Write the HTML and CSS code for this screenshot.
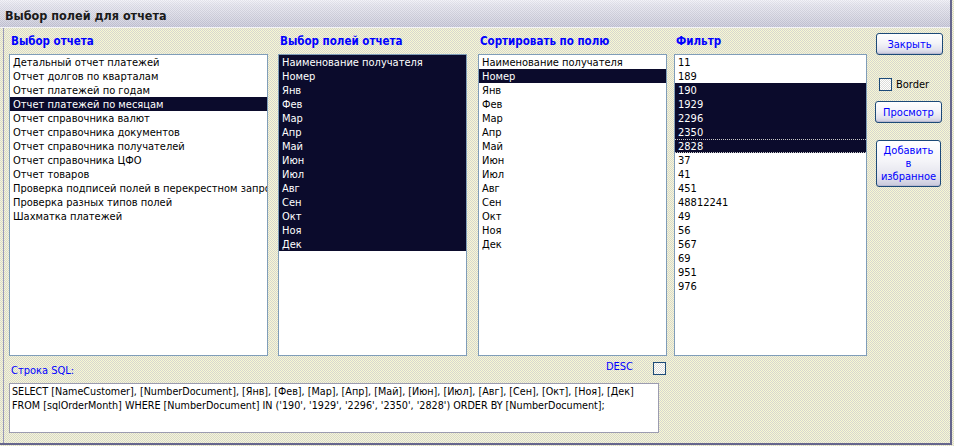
FILE: index.html
```html
<!DOCTYPE html>
<html lang="ru">
<head>
<meta charset="utf-8">
<title>Выбор полей для отчета</title>
<link rel="stylesheet" href="styles.css">
</head>
<body>
<div class="window">
  <div class="titlebar">Выбор полей для отчета</div>
  <div class="content">
    <div class="columns">
      <div class="col col-reports">
        <div class="col-label">Выбор отчета</div>
        <ul class="listbox">
          <li>Детальный отчет платежей</li>
          <li>Отчет долгов по кварталам</li>
          <li>Отчет платежей по годам</li>
          <li class="sel">Отчет платежей по месяцам</li>
          <li>Отчет справочника валют</li>
          <li>Отчет справочника документов</li>
          <li>Отчет справочника получателей</li>
          <li>Отчет справочника ЦФО</li>
          <li>Отчет товаров</li>
          <li>Проверка подписей полей в перекрестном запросе</li>
          <li>Проверка разных типов полей</li>
          <li>Шахматка платежей</li>
        </ul>
      </div>
      <div class="col col-fields">
        <div class="col-label">Выбор полей отчета</div>
        <ul class="listbox">
          <li class="sel">Наименование получателя</li>
          <li class="sel">Номер</li>
          <li class="sel">Янв</li>
          <li class="sel">Фев</li>
          <li class="sel">Мар</li>
          <li class="sel">Апр</li>
          <li class="sel">Май</li>
          <li class="sel">Июн</li>
          <li class="sel">Июл</li>
          <li class="sel">Авг</li>
          <li class="sel">Сен</li>
          <li class="sel">Окт</li>
          <li class="sel">Ноя</li>
          <li class="sel">Дек</li>
        </ul>
      </div>
      <div class="col col-sort">
        <div class="col-label">Сортировать по полю</div>
        <ul class="listbox">
          <li>Наименование получателя</li>
          <li class="sel">Номер</li>
          <li>Янв</li>
          <li>Фев</li>
          <li>Мар</li>
          <li>Апр</li>
          <li>Май</li>
          <li>Июн</li>
          <li>Июл</li>
          <li>Авг</li>
          <li>Сен</li>
          <li>Окт</li>
          <li>Ноя</li>
          <li>Дек</li>
        </ul>
      </div>
      <div class="col col-filter">
        <div class="col-label">Фильтр</div>
        <ul class="listbox">
          <li>11</li>
          <li>189</li>
          <li class="sel">190</li>
          <li class="sel">1929</li>
          <li class="sel">2296</li>
          <li class="sel">2350</li>
          <li class="sel focus">2828</li>
          <li>37</li>
          <li>41</li>
          <li>451</li>
          <li>48812241</li>
          <li>49</li>
          <li>56</li>
          <li>567</li>
          <li>69</li>
          <li>951</li>
          <li>976</li>
        </ul>
      </div>
      <div class="col col-actions">
        <button class="btn btn-close">Закрыть</button>
        <label class="check-row"><span class="checkbox"></span>Border</label>
        <button class="btn btn-preview">Просмотр</button>
        <button class="btn btn-fav">Добавить<br>в<br>избранное</button>
      </div>
    </div>
    <div class="sql-section">
      <div class="sql-head">
        <span class="sql-label">Строка SQL:</span>
        <span class="desc-label">DESC</span>
        <span class="checkbox desc-box"></span>
      </div>
      <div class="sql-box">SELECT [NameCustomer], [NumberDocument], [Янв], [Фев], [Мар], [Апр], [Май], [Июн], [Июл], [Авг], [Сен], [Окт], [Ноя], [Дек]<br>FROM [sqlOrderMonth] WHERE [NumberDocument] IN ('190', '1929', '2296', '2350', '2828') ORDER BY [NumberDocument];</div>
    </div>
  </div>
</div>
</body>
</html>
```

FILE: styles.css
```css
html, body {
  margin: 0;
  padding: 0;
}
body {
  width: 954px;
  height: 446px;
  overflow: hidden;
  font-family: "DejaVu Sans Condensed", "DejaVu Sans", sans-serif;
  font-size: 11px;
  color: #000;
  background: repeating-conic-gradient(#f8f8d2 0 25%, #d6d6d0 0 50%) 0 0 / 2px 2px;
}
.window {
  width: 952px;
  height: 445px;
  box-sizing: border-box;
  border-right: 2px solid #66668c;
  border-bottom: 2px solid #66668c;
  display: flex;
  flex-direction: column;
}
.titlebar {
  height: 28px;
  flex: none;
  box-sizing: border-box;
  padding-left: 5px;
  line-height: 32px;
  font-size: 12.5px;
  font-weight: bold;
  color: #1a1a1a;
  background:
    repeating-conic-gradient(rgba(255,255,255,0.25) 0 25%, rgba(0,0,0,0.04) 0 50%) 0 0 / 2px 2px,
    linear-gradient(#eeeef6 0, #e2e2ec 20%, #d0d0de 70%, #c4c4d6 100%);
  border-bottom: 1px solid #f4f4f8;
}
.content {
  flex: 1;
  margin-left: 3px;
  border-left: 1px solid #9898b8;
  padding-left: 5px;
  display: flex;
  flex-direction: column;
}
.columns {
  display: flex;
  align-items: flex-start;
}
.col-label {
  height: 26px;
  box-sizing: border-box;
  padding: 6px 0 0 2px;
  font-size: 11.5px;
  font-weight: bold;
  color: #0000ff;
  white-space: nowrap;
}
.col-reports { width: 259px; }
.col-fields { width: 189px; margin-left: 10px; }
.col-sort { width: 189px; margin-left: 11px; }
.col-filter { width: 193px; margin-left: 7px; }
.col-actions {
  width: 68px;
  margin-left: 8px;
  display: flex;
  flex-direction: column;
  align-items: flex-start;
  padding-top: 5px;
}
.listbox {
  list-style: none;
  margin: 0;
  padding: 0;
  height: 302px;
  box-sizing: border-box;
  border: 1px solid #7f9db9;
  background: #ffffff;
  overflow: hidden;
}
.listbox li {
  height: 14px;
  line-height: 15px;
  padding-left: 3px;
  white-space: nowrap;
  overflow: hidden;
  box-sizing: border-box;
}
.listbox li.sel {
  background: #0b0b2c;
  color: #ffffff;
}
.listbox li.focus {
  border-top: 1px dotted #c8c8c8;
  border-bottom: 1px dotted #c8c8c8;
  line-height: 13px;
}
.btn {
  font-family: inherit;
  font-size: 11px;
  color: #0000ff;
  border: 1px solid #1c4a78;
  border-radius: 3px;
  background: linear-gradient(#ffffff 0, #f4f4f8 45%, #e2e2ec 80%, #c8c8dc 100%);
  padding: 0;
  box-shadow: inset 0 -1px 0 #b8b8d0;
}
.btn-close {
  width: 67px;
  height: 22px;
  margin-left: 1px;
}
.btn-preview {
  width: 67px;
  height: 22px;
  margin-top: 10px;
}
.btn-fav {
  width: 65px;
  height: 47px;
  margin-left: 1px;
  margin-top: 17px;
  line-height: 13px;
}
.check-row {
  display: flex;
  align-items: center;
  margin-top: 22px;
  margin-left: 4px;
  height: 14px;
}
.checkbox {
  display: inline-block;
  width: 13px;
  height: 13px;
  box-sizing: border-box;
  border: 1px solid #1c4a78;
  background: repeating-conic-gradient(#ffffff 0 25%, #dcdcd8 0 50%) 0 0 / 2px 2px;
  margin-right: 4px;
}
.sql-section {
  width: 657px;
}
.sql-head {
  height: 27px;
  display: flex;
  align-items: flex-start;
}
.sql-label {
  color: #0000ff;
  margin: 8px 0 0 2px;
  flex: 1;
}
.desc-label {
  color: #0000ff;
  margin-top: 4px;
}
.desc-box {
  margin: 6px 0 0 20px;
}
.sql-box {
  width: 650px;
  height: 50px;
  box-sizing: border-box;
  border: 1px solid #9c9cb0;
  background: #ffffff;
  padding: 1px 0 0 2px;
  font-size: 10.7px;
  line-height: 14px;
  white-space: nowrap;
  overflow: hidden;
}
```
